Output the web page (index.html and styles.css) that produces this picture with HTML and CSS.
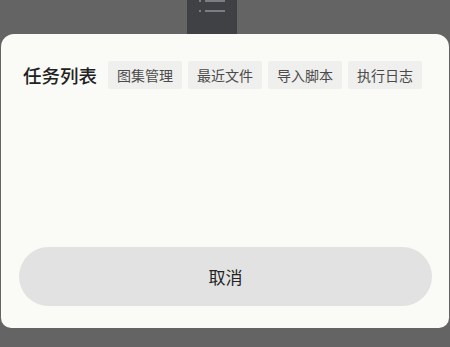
FILE: index.html
```html
<!DOCTYPE html>
<html lang="zh-CN">
<head>
    <meta charset="UTF-8">
    <meta name="viewport" content="width=device-width, initial-scale=1.0">
    <title>任务列表</title>
    <link rel="stylesheet" href="styles.css">
</head>
<body>
    <div class="backdrop">
        <div class="peek">
            <div class="peek-line top"><span class="dot"></span><span class="bar"></span></div>
            <div class="peek-line"><span class="dot"></span><span class="bar"></span></div>
        </div>
    </div>

    <div class="sheet">
        <div class="sheet-header">
            <h1 class="sheet-title">任务列表</h1>
            <div class="chips">
                <button class="chip" type="button">图集管理</button>
                <button class="chip" type="button">最近文件</button>
                <button class="chip" type="button">导入脚本</button>
                <button class="chip" type="button">执行日志</button>
            </div>
        </div>

        <button class="cancel-button" type="button">取消</button>
    </div>
</body>
</html>
```

FILE: styles.css
```css
html, body {
    margin: 0;
    padding: 0;
}

body {
    width: 450px;
    height: 347px;
    overflow: hidden;
    background-color: #646464;
    font-family: "Noto Sans CJK SC", "Noto Sans", sans-serif;
    display: flex;
    flex-direction: column;
}

.backdrop {
    height: 34px;
    flex-shrink: 0;
}

.peek {
    width: 50px;
    height: 34px;
    margin-left: 187px;
    background-color: #404145;
    display: flex;
    flex-direction: column;
}

.peek-line {
    display: flex;
    align-items: center;
    height: 3px;
    margin-top: 7px;
    padding-left: 12px;
}

.peek-line.top {
    margin-top: -1px;
}

.dot {
    width: 2px;
    height: 2px;
    background-color: #7c7d82;
    margin-right: 4px;
}

.bar {
    width: 20px;
    height: 2px;
    background-color: #7c7d82;
}

.sheet {
    height: 294px;
    margin: 0 1px;
    background-color: #fafaf6;
    border-radius: 13px 13px 10px 10px;
    display: flex;
    flex-direction: column;
    padding: 27px 17px 22px 18px;
    box-sizing: border-box;
}

.sheet-header {
    display: flex;
    align-items: center;
    padding-left: 4px;
}

.sheet-title {
    margin: 0 11px 0 0;
    font-size: 18.5px;
    font-weight: 500;
    color: #222;
    line-height: 28px;
}

.chips {
    display: flex;
    gap: 6px;
}

.chip {
    height: 28px;
    padding: 0 9px;
    border: none;
    border-radius: 2px;
    background-color: #efefed;
    color: #4a4a4a;
    font-family: inherit;
    font-size: 14px;
    line-height: 28px;
}

.cancel-button {
    margin-top: auto;
    height: 59px;
    width: 100%;
    border: none;
    border-radius: 30px;
    background-color: #e2e2e2;
    color: #222;
    font-family: inherit;
    font-size: 17px;
}
```
